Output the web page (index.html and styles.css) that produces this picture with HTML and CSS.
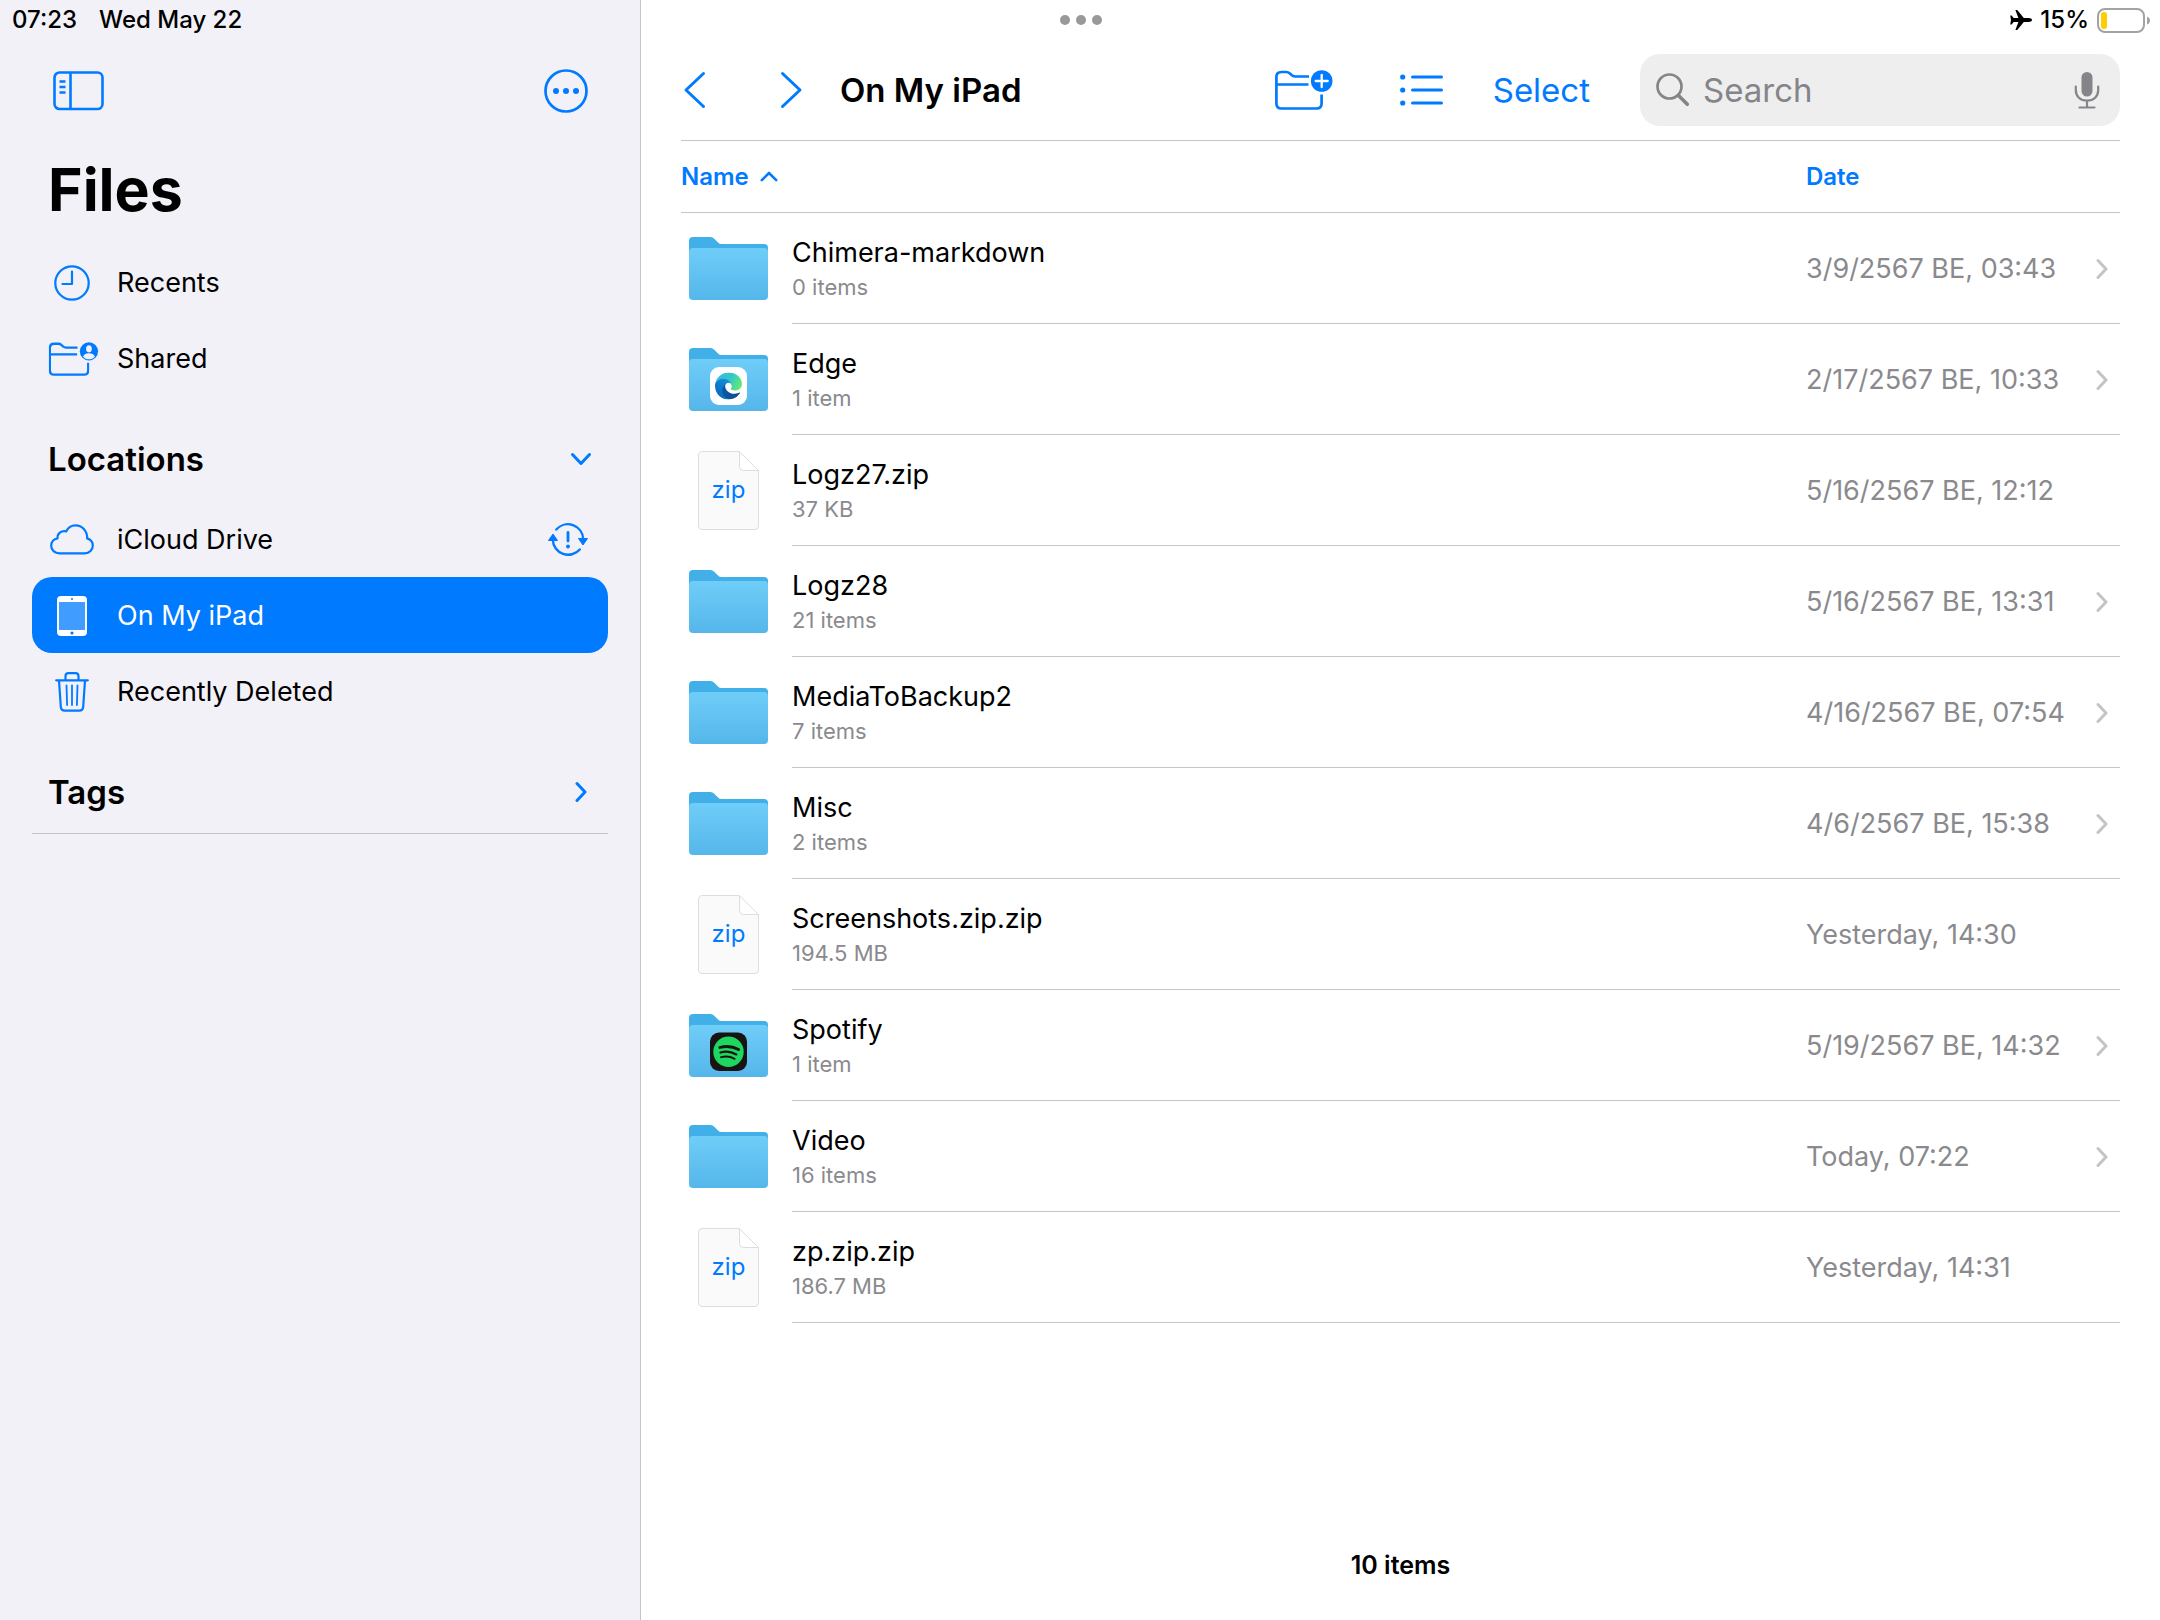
FILE: index.html
```html
<!DOCTYPE html>
<html lang="en">
<head>
<meta charset="utf-8">
<meta name="viewport" content="width=device-width, initial-scale=1">
<title>Files</title>
<link rel="stylesheet" href="styles.css">
</head>
<body>
<svg class="sprite" width="0" height="0" aria-hidden="true">
  <defs>
    <linearGradient id="folder-front" x1="0" y1="0" x2="0" y2="1">
      <stop offset="0" stop-color="#6fcdf8"/>
      <stop offset="1" stop-color="#55b6ea"/>
    </linearGradient>
    <linearGradient id="edge-dark" x1="0" y1="0" x2="1" y2="0">
      <stop offset="0" stop-color="#0c59a4"/>
      <stop offset="1" stop-color="#114a8b"/>
    </linearGradient>
    <linearGradient id="edge-blue" x1="1" y1="0" x2="0.3" y2="1">
      <stop offset="0" stop-color="#1b9de2"/>
      <stop offset="0.5" stop-color="#0f7fd3"/>
      <stop offset="1" stop-color="#0667b8"/>
    </linearGradient>
    <linearGradient id="edge-green" x1="0" y1="0.3" x2="1" y2="0.7">
      <stop offset="0" stop-color="#35b9e8"/>
      <stop offset="0.5" stop-color="#35c8c6"/>
      <stop offset="1" stop-color="#66eb6e"/>
    </linearGradient>
  </defs>
  <symbol id="folder" viewBox="0 0 79 63">
    <path fill="#41afe8" d="M0 20V4q0-4 4-4h17.500q2 0 3.500 1.500l4 4q1.500 1.500 3.500 1.500H75q4 0 4 4v12z"/>
    <path fill="url(#folder-front)" d="M0 15q0-4 4-4h71q4 0 4 4v44q0 4-4 4H4q-4 0-4-4z"/>
  </symbol>
  <symbol id="zip-page" viewBox="0 0 61 79">
    <path fill="#fafafa" stroke="#dddddf" d="M4 .5h37L60.500 20v55q0 3.500-3.500 3.500H4Q.5 78.500.5 75V4Q.5.5 4 .5z"/>
    <path fill="#fff" stroke="#dddddf" d="M41.500.8V15.500q0 4 4 4h15z"/>
  </symbol>
  <symbol id="folder-outline" viewBox="0 0 48 40">
    <path fill="none" stroke="currentColor" stroke-width="2.700" d="M34 6.500H20.500c-1.500 0-2.500-.4-3.600-1.300l-2-1.800C13.800 2.400 12.800 2 11.300 2H6.400c-3.200 0-5 1.800-5 5v26.500c0 3.200 1.800 5 5 5h35.200c3.200 0 5-1.800 5-5V24.500M1.400 14.500H33.500"/>
  </symbol>
  <symbol id="chevron" viewBox="0 0 12 22">
    <path fill="none" stroke="currentColor" stroke-width="3" stroke-linecap="round" stroke-linejoin="round" d="M2 2.500l8 8.500-8 8.500"/>
  </symbol>
</svg>

<header class="status">
  <div class="status-left"><time>07:23</time><span>Wed May 22</span></div>
  <svg class="status-dots" width="42" height="10" viewBox="0 0 42 10" aria-hidden="true"><g fill="#999"><circle cx="5" cy="5" r="5"/><circle cx="21" cy="5" r="5"/><circle cx="37" cy="5" r="5"/></g></svg>
  <div class="status-right">
    <svg width="22" height="20" viewBox="0 0 22 20" aria-hidden="true"><path d="M22 10c0-1.200-1.500-1.900-3.300-1.900h-4.900L7.700.6C7.400.2 7.100 0 6.700 0H5.400l3 8.100H3.700L1.600 5.500H.2L1 10l-.8 4.500h1.400l2.100-2.600h4.700L5.400 20h1.300c.4 0 .7-.2 1-.6l6.100-7.500h4.900c1.800 0 3.300-.7 3.300-1.900z"/></svg>
    <span>15%</span>
    <svg width="53" height="25" viewBox="0 0 53 25" aria-hidden="true"><rect x="1" y="1" width="46" height="23" rx="7" fill="none" stroke="#a3a3a3" stroke-width="2"/><rect x="4" y="4" width="6" height="17" rx="3" fill="#fc0"/><path fill="#a3a3a3" d="M50 8.500q3 1 3 4t-3 4z"/></svg>
  </div>
</header>

<div class="app">
  <aside class="sidebar">
    <div class="sidebar-bar">
      <button class="icon-button" aria-label="Hide sidebar"><svg width="51" height="40" viewBox="0 0 51 40"><g fill="none" stroke="currentColor" stroke-width="2.600"><rect x="1.500" y="1.500" width="48" height="36.500" rx="5"/><path d="M17.500 1.500V38M6.500 10.500h6M6.500 16h6M6.500 21.500h6"/></g></svg></button>
      <button class="icon-button" aria-label="More"><svg width="44" height="44" viewBox="0 0 44 44"><circle cx="22" cy="22" r="20.500" fill="none" stroke="currentColor" stroke-width="2.700"/><g fill="currentColor"><circle cx="12" cy="22" r="3"/><circle cx="22" cy="22" r="3"/><circle cx="32" cy="22" r="3"/></g></svg></button>
    </div>
    <h1 class="sidebar-title">Files</h1>
    <nav class="nav">
      <a class="nav-item" href="#recents"><span class="nav-icon"><svg width="36" height="36" viewBox="0 0 36 36"><g fill="none" stroke="currentColor" stroke-width="2.200" stroke-linecap="round" stroke-linejoin="round"><circle cx="18" cy="18" r="16.700"/><path d="M18 6.500V19H8.500"/></g></svg></span>Recents</a>
      <a class="nav-item" href="#shared"><span class="nav-icon"><svg class="overhang" width="50" height="34" viewBox="-2 0 59 40"><use href="#folder-outline" width="48" height="40"/><circle cx="47.500" cy="11" r="10.800" fill="currentColor"/><g fill="#f2f1f7"><ellipse cx="47.500" cy="8" rx="3.400" ry="4.200"/><path d="M40.500 17.300c1.200-3 3.800-4 7-4s5.800 1 7 4c-1.800 2-4.200 3-7 3s-5.200-1-7-3z"/></g></svg></span>Shared</a>

      <h2 class="nav-heading"><button class="nav-toggle" aria-expanded="true">Locations<svg width="22" height="14" viewBox="0 0 22 14"><path fill="none" stroke="currentColor" stroke-width="3" stroke-linecap="round" stroke-linejoin="round" d="M2.500 2.500l8.500 9 8.500-9"/></svg></button></h2>
      <a class="nav-item" href="#icloud"><span class="nav-icon"><svg width="44" height="31" viewBox="0 0 44 31"><path fill="none" stroke="currentColor" stroke-width="2.200" stroke-linejoin="round" d="M9.500 29.300C4.700 29.300 1.200 26 1.200 21.800c0-3.900 2.600-7 6.300-7.500C7.300 9.500 11 6.300 16.300 7.300 18 3.600 21.600 1.300 25.500 1.300c6.500 0 11.800 5.300 11.700 13.100 3.500 1.200 5.600 3.900 5.600 7.200 0 4.300-3.400 7.700-8 7.700z"/></svg></span>iCloud Drive
        <svg class="nav-status" width="40" height="35" viewBox="0 0 40 35" role="img" aria-label="Sync problem"><g fill="none" stroke="currentColor" stroke-width="2.400" stroke-linecap="round"><path d="M8.300 7.500A15.400 15.400 0 0 1 35.200 17M31.800 27.500A15.400 15.400 0 0 1 4.800 18"/><path stroke-width="2.800" d="M20 10.500v8.500"/></g><g fill="currentColor"><circle cx="20" cy="24.500" r="1.900"/><path stroke="currentColor" stroke-linejoin="round" d="M30.500 16.500h9l-4.500 6.500zM.5 18.500h9L5 12z"/></g></svg></a>
      <a class="nav-item nav-item-active" href="#ipad" aria-current="page"><span class="nav-icon"><svg width="30" height="40" viewBox="0 0 30 40"><rect width="30" height="40" rx="4" fill="#fff"/><rect x="2" y="6" width="26" height="28" fill="#409cff"/><circle cx="15" cy="3" r="1" fill="#007aff"/><circle cx="15" cy="37" r="1.600" fill="#007aff"/></svg></span>On My iPad</a>
      <a class="nav-item" href="#deleted"><span class="nav-icon"><svg width="34" height="40" viewBox="0 0 34 40"><g fill="none" stroke="currentColor" stroke-width="2.200" stroke-linecap="round" stroke-linejoin="round"><path d="M1.200 8.300h31.600M10.500 8V4.200q0-3 3-3h7q3 0 3 3V8M4 8.500l1.800 26.300q.3 3.800 4 3.800h14.400q3.700 0 4-3.800L30 8.500"/><path stroke-width="1.800" d="M11.500 13.500l.6 19.500M17 13.500V33M22.500 13.500l-.6 19.500"/></g></svg></span>Recently Deleted</a>
      <h2 class="nav-heading nav-heading-closed"><button class="nav-toggle" aria-expanded="false">Tags<svg width="22" height="22" viewBox="0 0 22 22"><use href="#chevron" x="5" width="12" height="22"/></svg></button></h2>
    </nav>
  </aside>

  <main class="main">
    <div class="toolbar">
      <div class="history">
        <button class="icon-button" aria-label="Back"><svg width="28" height="38" viewBox="0 0 28 38"><path fill="none" stroke="currentColor" stroke-width="3" stroke-linecap="round" stroke-linejoin="round" d="M22.500 2.500L5 19l17.500 16.500"/></svg></button>
        <button class="icon-button" aria-label="Forward"><svg width="28" height="38" viewBox="0 0 28 38"><path fill="none" stroke="currentColor" stroke-width="3" stroke-linecap="round" stroke-linejoin="round" d="M5.500 2.500L23 19 5.500 35.500"/></svg></button>
      </div>
      <h2 class="toolbar-title">On My iPad</h2>
      <div class="actions">
        <button class="icon-button" aria-label="New folder"><svg width="58" height="40" viewBox="0 0 58 40"><use href="#folder-outline" width="48" height="40"/><circle cx="46.700" cy="11" r="10.800" fill="currentColor"/><path stroke="#fff" stroke-width="2.300" stroke-linecap="round" d="M46.700 5v12M40.700 11h12"/></svg></button>
        <button class="icon-button" aria-label="View as list"><svg width="43" height="32" viewBox="0 0 43 32"><g fill="currentColor"><circle cx="2.700" cy="3" r="2.600"/><circle cx="2.700" cy="16" r="2.600"/><circle cx="2.700" cy="29" r="2.600"/></g><path stroke="currentColor" stroke-width="3" stroke-linecap="round" d="M12.500 3h29M12.500 16h29M12.500 29h29"/></svg></button>
        <button class="text-button">Select</button>
      </div>
      <label class="search">
        <svg width="34" height="34" viewBox="0 0 34 34" aria-hidden="true"><g fill="none" stroke="currentColor" stroke-linecap="round"><circle cx="13.500" cy="13.500" r="12" stroke-width="2.700"/><path stroke-width="3.600" d="M22.500 22.500l8.800 8.800"/></g></svg>
        <input class="search-input" type="search" placeholder="Search" aria-label="Search">
        <svg width="26" height="37" viewBox="0 0 26 37" aria-hidden="true"><rect x="7.500" width="11" height="24.500" rx="5.500" fill="currentColor"/><path fill="none" stroke="currentColor" stroke-width="2.200" stroke-linecap="round" d="M1.800 14.500v3.500c0 6.500 4.500 10.700 11.200 10.700s11.200-4.200 11.200-10.700v-3.500M13 29v6.500M5.500 35.500h15"/></svg>
      </label>
    </div>

    <table class="files">
      <colgroup><col class="col-icon"><col><col class="col-date"><col class="col-open"></colgroup>
      <thead>
        <tr>
          <th colspan="2" aria-sort="ascending"><button class="sort">Name<svg width="18" height="11" viewBox="0 0 18 11"><path fill="none" stroke="currentColor" stroke-width="2.600" stroke-linecap="round" stroke-linejoin="round" d="M1.800 9.200L9 2l7.200 7.200"/></svg></button></th>
          <th colspan="2"><button class="sort">Date</button></th>
        </tr>
      </thead>
      <tbody>
        <tr><td class="thumb"><svg width="79" height="63"><use href="#folder"/></svg></td><td><a class="file-name" href="#f1">Chimera-markdown</a><small class="file-info">0 items</small></td><td class="date">3/9/2567 BE, 03:43</td><td class="open"><svg width="12" height="22"><use href="#chevron"/></svg></td></tr>
        <tr><td class="thumb"><svg width="79" height="63" viewBox="0 0 79 63"><use href="#folder"/><rect x="21" y="19" width="37" height="38" rx="9" fill="#fff"/>
          <svg x="26" y="24.500" width="27" height="27" viewBox="0 0 256 256"><path fill="url(#edge-dark)" d="M231.070 190.540a93.730 93.730 0 0 1-10.540 4.710 101.870 101.870 0 0 1-35.900 6.460c-47.320 0-88.540-32.550-88.540-74.320A31.480 31.480 0 0 1 112.520 100.460c-42.800 1.800-53.800 46.400-53.800 72.530 0 73.880 68.090 81.370 82.760 81.370 7.910 0 19.840-2.300 27-4.560l1.310-.44a128.340 128.340 0 0 0 66.600-52.800 4 4 0 0 0-5.320-6.020z"/><path fill="url(#edge-blue)" d="M105.730 241.420a79.200 79.200 0 0 1-22.740-21.340 80.720 80.720 0 0 1 29.530-120c3.120-1.470 8.450-4.130 15.540-4a32.350 32.350 0 0 1 25.690 13 31.880 31.880 0 0 1 6.360 18.660c0-.21 24.460-79.600-80-79.600-43.900 0-80 41.660-80 78.210a130.150 130.150 0 0 0 12.110 56 128 128 0 0 0 156.380 67.110 75.550 75.550 0 0 1-62.780-8z"/><path fill="url(#edge-green)" d="M152.330 148.860c-.81 1.050-3.300 2.500-3.300 5.660 0 2.610 1.700 5.120 4.720 7.230 14.380 10 41.490 8.680 41.560 8.680a59.560 59.560 0 0 0 30.270-8.350A61.380 61.380 0 0 0 255.910 109.250c.26-22.410-8-37.310-11.340-43.910C223.380 23.890 177.650 0 128 0A128 128 0 0 0 0 126.200c.48-36.540 36.800-66.050 80-66.050 3.500 0 23.460.34 42 10.070 16.340 8.580 24.900 18.940 30.850 29.210 6.180 10.670 7.280 24.150 7.280 29.520s-2.750 13.320-7.800 19.910z"/></svg></svg></td><td><a class="file-name" href="#f2">Edge</a><small class="file-info">1 item</small></td><td class="date">2/17/2567 BE, 10:33</td><td class="open"><svg width="12" height="22"><use href="#chevron"/></svg></td></tr>
        <tr><td class="thumb"><div class="zip"><svg width="61" height="79"><use href="#zip-page"/></svg><span class="zip-label">zip</span></div></td><td><a class="file-name" href="#f3">Logz27.zip</a><small class="file-info">37 KB</small></td><td class="date">5/16/2567 BE, 12:12</td><td class="open"></td></tr>
        <tr><td class="thumb"><svg width="79" height="63"><use href="#folder"/></svg></td><td><a class="file-name" href="#f4">Logz28</a><small class="file-info">21 items</small></td><td class="date">5/16/2567 BE, 13:31</td><td class="open"><svg width="12" height="22"><use href="#chevron"/></svg></td></tr>
        <tr><td class="thumb"><svg width="79" height="63"><use href="#folder"/></svg></td><td><a class="file-name" href="#f5">MediaToBackup2</a><small class="file-info">7 items</small></td><td class="date">4/16/2567 BE, 07:54</td><td class="open"><svg width="12" height="22"><use href="#chevron"/></svg></td></tr>
        <tr><td class="thumb"><svg width="79" height="63"><use href="#folder"/></svg></td><td><a class="file-name" href="#f6">Misc</a><small class="file-info">2 items</small></td><td class="date">4/6/2567 BE, 15:38</td><td class="open"><svg width="12" height="22"><use href="#chevron"/></svg></td></tr>
        <tr><td class="thumb"><div class="zip"><svg width="61" height="79"><use href="#zip-page"/></svg><span class="zip-label">zip</span></div></td><td><a class="file-name" href="#f7">Screenshots.zip.zip</a><small class="file-info">194.5 MB</small></td><td class="date">Yesterday, 14:30</td><td class="open"></td></tr>
        <tr><td class="thumb"><svg width="79" height="63" viewBox="0 0 79 63"><use href="#folder"/><rect x="21" y="18.500" width="37" height="38.500" rx="9" fill="#191414"/><circle cx="39.500" cy="37.800" r="15.200" fill="#1ed760"/><g fill="none" stroke="#191414" stroke-linecap="round"><path stroke-width="2.800" d="M30.800 33.500c6.500-1.800 13.200-1 18.800 2"/><path stroke-width="2.300" d="M31.500 38.500c5.500-1.500 11-.8 15.800 1.900"/><path stroke-width="1.900" d="M32 43.200c4.800-1.200 9.500-.7 13.600 1.600"/></g></svg></td><td><a class="file-name" href="#f8">Spotify</a><small class="file-info">1 item</small></td><td class="date">5/19/2567 BE, 14:32</td><td class="open"><svg width="12" height="22"><use href="#chevron"/></svg></td></tr>
        <tr><td class="thumb"><svg width="79" height="63"><use href="#folder"/></svg></td><td><a class="file-name" href="#f9">Video</a><small class="file-info">16 items</small></td><td class="date">Today, 07:22</td><td class="open"><svg width="12" height="22"><use href="#chevron"/></svg></td></tr>
        <tr><td class="thumb"><div class="zip"><svg width="61" height="79"><use href="#zip-page"/></svg><span class="zip-label">zip</span></div></td><td><a class="file-name" href="#f10">zp.zip.zip</a><small class="file-info">186.7 MB</small></td><td class="date">Yesterday, 14:31</td><td class="open"></td></tr>
      </tbody>
    </table>
    <footer class="summary">10 items</footer>
  </main>
</div>
</body>
</html>
```
FILE: styles.css
```css
* { box-sizing: border-box; }

:root {
  --blue: #007aff;
  --line: #c5c5c7;
  --grey: #8a8a8e;
}

body {
  margin: 0;
  background: #fff;
  color: #000;
  font-family: Inter, "Liberation Sans", sans-serif;
  font-size: 27px;
  line-height: 34px;
}

svg { display: block; flex: none; }
a { color: inherit; text-decoration: none; }

button {
  padding: 0;
  border: 0;
  background: none;
  color: var(--blue);
  font: inherit;
  cursor: pointer;
}

.sprite { position: absolute; }
.overhang { overflow: visible; }

/* Status bar lies over both panes */
.status {
  position: absolute;
  inset: 0 0 auto;
  display: grid;
  grid-template-columns: 1fr auto 1fr;
  align-items: center;
  height: 40px;
  padding: 0 10px 0 12px;
  font-size: 24px;
  font-weight: 500;
}
.status-left { display: flex; gap: 22px; }
.status-right { display: flex; align-items: center; justify-content: flex-end; gap: 8px; }

.app { display: flex; min-height: 100vh; }

/* Sidebar */
.sidebar {
  flex: 0 0 641px;
  padding: 40px 32px;
  border-right: 1px solid var(--line);
  background: #f2f1f7;
}
.sidebar-bar {
  display: flex;
  align-items: center;
  justify-content: space-between;
  height: 102px;
  padding: 0 20px 0 21px;
}
.sidebar-title {
  margin: 0;
  padding: 12px 16px 18px;
  font-size: 59px;
  font-weight: 700;
  line-height: 72px;
}
.nav-item {
  display: flex;
  align-items: center;
  gap: 20px;
  height: 76px;
  padding: 1px 20px 0 15px;
  border-radius: 20px;
}
.nav-icon {
  display: flex;
  justify-content: center;
  width: 50px;
  color: var(--blue);
}
.nav-status { margin-left: auto; color: var(--blue); }
.nav-item-active { background: var(--blue); color: #fff; }
.nav-heading {
  height: 105px;
  margin: 0;
  padding: 21px 16px 0;
  font-size: 33px;
  font-weight: 600;
  line-height: 40px;
}
.nav-heading-closed { border-bottom: 1px solid var(--line); }
.nav-toggle {
  display: flex;
  align-items: center;
  justify-content: space-between;
  width: 100%;
  height: 84px;
  color: #000;
}
.nav-toggle svg { color: var(--blue); }

/* Main pane */
.main {
  flex: 1;
  display: flex;
  flex-direction: column;
  min-width: 0;
  padding: 40px 40px;
}
.toolbar {
  display: flex;
  align-items: center;
  height: 101px;
  border-bottom: 1px solid var(--line);
  font-size: 33px;
  line-height: 40px;
}
.history { display: flex; gap: 68px; margin-right: 35px; }
.toolbar-title { margin: 0; font-size: 33px; font-weight: 600; }
.actions {
  display: flex;
  align-items: center;
  gap: 50px;
  margin: 0 50px 0 auto;
}
.actions .icon-button:first-child { margin-right: 17px; }
.search {
  display: flex;
  align-items: center;
  gap: 13px;
  width: 480px;
  height: 72px;
  padding: 0 20px 0 16px;
  border-radius: 20px;
  background: #eee;
  color: #858589;
}
.search-input {
  flex: 1;
  min-width: 0;
  padding: 0;
  border: 0;
  outline: 0;
  background: none;
  font: inherit;
}
.search-input::placeholder { color: #858589; opacity: 1; }

/* File list */
.files { width: 100%; border-spacing: 0; table-layout: fixed; }
.col-icon { width: 111px; }
.col-date { width: 284px; }
.col-open { width: 30px; }
.files th {
  height: 72px;
  padding: 0;
  border-bottom: 1px solid var(--line);
  text-align: left;
}
.sort {
  display: flex;
  align-items: center;
  gap: 11px;
  font-size: 24px;
  font-weight: 600;
}
.files td {
  height: 111px;
  padding: 0;
  border-bottom: 1px solid var(--line);
}
.files .thumb { padding-left: 8px; border-bottom: 0; }
.file-name { display: block; padding-top: 4px; }
.file-info { display: block; color: var(--grey); font-size: 22px; }
.files .date { padding-top: 2px; color: var(--grey); white-space: nowrap; }
.files .open { padding-top: 2px; color: #c4c4c6; }
.files .open svg { margin-left: auto; margin-right: 12px; }
.zip { position: relative; width: 61px; margin-left: 9px; }
.zip-label {
  position: absolute;
  inset: 22px 0 auto;
  color: var(--blue);
  font-size: 24px;
  text-align: center;
}
.summary {
  margin-top: auto;
  font-size: 25px;
  font-weight: 600;
  line-height: 30px;
  text-align: center;
}
```
